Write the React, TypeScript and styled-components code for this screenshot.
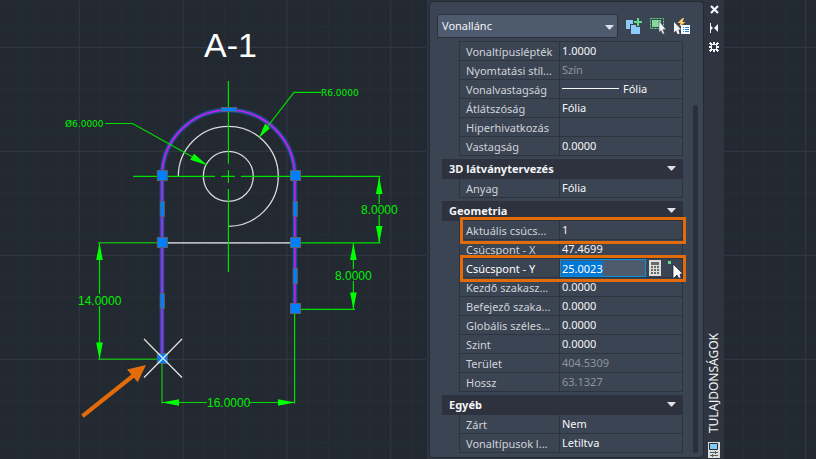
import React, { useEffect, useRef, useState } from "react";
import styled, { createGlobalStyle, css } from "styled-components";

const GlobalStyle = createGlobalStyle`
  * { box-sizing: border-box; }
  body { margin: 0; background: #222930; }
`;

const Page = styled.main`
  display: grid;
  grid-template-columns: minmax(0, 1fr) 297px 92px;
  min-height: 100vh;
  background: #222930;
  font-family: "Noto Sans", "Open Sans", sans-serif;
  font-size: 11px;
  color: #e8eaec;
`;

const DrawingArea = styled.svg`
  display: block;
  width: 100%;
  height: 100%;
`;

const PaletteFrame = styled.aside`
  display: grid;
  grid-template-columns: minmax(0, 1fr) 20px;
  padding: 1px 0 1px 2px;
  background: #2f3540;
`;

const PalettePanel = styled.section`
  display: flex;
  flex-direction: column;
  gap: 3px;
  padding: 12px 5px 3px 7px;
  border: 1px solid #242932;
  border-radius: 4px;
  background: #3b4453;
`;

const Toolbar = styled.div`
  display: flex;
  align-items: center;
  height: 24px;
  padding-right: 4px;
`;

const SelectWrap = styled.label`
  position: relative;
  flex: 1;
  height: 24px;
  margin-right: 4px;
`;

const TypeSelect = styled.select`
  appearance: none;
  width: 100%;
  height: 24px;
  padding: 0 24px 1px 4px;
  border: 1px solid #2b313c;
  border-radius: 2px;
  background: #4e5a6d;
  color: #f4f5f6;
  font: inherit;
  font-size: 11px;
`;

const SelectArrow = styled.svg`
  position: absolute;
  top: 11px;
  right: 4px;
  pointer-events: none;
`;

const IconButton = styled.button`
  display: grid;
  place-items: center;
  width: 24px;
  height: 24px;
  padding: 0;
  border: 0;
  background: none;
`;

const PanelBody = styled.div`
  display: grid;
  grid-template-columns: minmax(0, 1fr) 5px;
  gap: 10px;
  padding-left: 5px;
`;

const Sections = styled.div`
  display: flex;
  flex-direction: column;
  gap: 3px;
`;

const Group = styled.section``;

const GroupHeader = styled.button`
  display: flex;
  align-items: center;
  justify-content: space-between;
  width: 100%;
  height: 20px;
  padding: 0 7px 1px;
  border: 0;
  background: #2d323e;
  color: #f4f5f6;
  font: inherit;
  font-weight: 700;
  text-align: left;
`;

const PropertyTable = styled.table<{ $topLine?: boolean }>`
  width: calc(100% - 17px);
  margin-left: 17px;
  border-collapse: separate;
  border-spacing: 0;
  table-layout: fixed;
  ${(p) => p.$topLine && css`border-top: 1px solid #2d333f;`}
`;

const PropertyRow = styled.tr<{ $framed?: boolean }>`
  position: relative;
  height: 19px;
  ${(p) =>
    p.$framed &&
    css`
      th::after {
        content: "";
        position: absolute;
        z-index: 1;
        inset: -4px -3px -4px 1px;
        border: 3px solid #e36c0a;
        pointer-events: none;
      }
    `}
`;

const PropertyName = styled.th<{ $bright?: boolean }>`
  width: 100px;
  height: 19px;
  padding: 1px 0 0 6px;
  border-left: 1px solid #2d333f;
  border-bottom: 1px solid #2d333f;
  color: ${(p) => (p.$bright ? "#ffffff" : "#cfd3d8")};
  font-size: 11px;
  font-weight: 400;
  line-height: 17px;
  text-align: left;
  white-space: nowrap;
`;

const PropertyValue = styled.td<{ $dim?: boolean; $editing?: boolean }>`
  height: 19px;
  padding: 0 0 0 ${(p) => (p.$editing ? 0 : 2)}px;
  border: solid #2d333f;
  border-width: 0 1px 1px;
  color: ${(p) => (p.$dim ? "#8d949e" : "#f4f5f6")};
  font-size: 11px;
  line-height: 18px;
  white-space: nowrap;
`;

const LineWeight = styled.span`
  display: flex;
  align-items: center;
  gap: 4px;
`;

const Editor = styled.div`
  position: relative;
  display: flex;
  align-items: center;
  gap: 3px;
`;

const ValueInput = styled.input`
  width: 86px;
  height: 18px;
  padding: 0 1px;
  border: 1px solid #0a8fd8;
  border-radius: 0;
  outline: 0;
  background: #4e5a6d;
  color: #ffffff;
  font: inherit;
  line-height: 16px;
  &::selection {
    background: #0078d7;
    color: #ffffff;
  }
`;

const CalcButton = styled.button`
  display: flex;
  padding: 0;
  border: 0;
  background: none;
`;

const Pointer = styled.svg`
  position: absolute;
  top: 2px;
  left: 108px;
`;

const ScrollTrack = styled.div`
  padding-top: 64px;
  display: flex;
`;

const ScrollThumb = styled.div`
  flex: 1;
  border-radius: 3px;
  background: #2a303b;
`;

const TitleBar = styled.header`
  display: flex;
  flex-direction: column;
  align-items: center;
`;

const BarButton = styled.button`
  display: grid;
  place-items: center;
  width: 20px;
  height: 19px;
  padding: 0;
  border: 0;
  background: none;
  &:first-child { height: 17px; }
`;

const BarTitle = styled.h1`
  margin: auto 0 9px;
  color: #f4f5f6;
  font-size: 12px;
  font-weight: 400;
  line-height: 16px;
  writing-mode: vertical-rl;
  transform: rotate(180deg);
`;

const DownArrow = () => (
  <svg width="9" height="5" viewBox="0 0 9 5" aria-hidden="true">
    <path d="M0 0h9L5 4.5H4Z" fill="#dfe2e5" />
  </svg>
);

const GRID_STEP = 103.8;

function GridLines({ startX, width }: { startX: number; width: number }) {
  const minor: React.ReactNode[] = [];
  const major: React.ReactNode[] = [];
  for (let i = 0; i * (GRID_STEP / 5) + startX < width; i++) {
    const x = startX + (i * GRID_STEP) / 5;
    if (i % 5) minor.push(<path key={"x" + i} d={`M${x} 0V459`} />);
  }
  for (let x = startX; x < width; x += GRID_STEP) {
    if (x >= 0) major.push(<path key={"X" + x} d={`M${x} 0V459`} />);
  }
  for (let i = -2; i < 21; i++) {
    const y = 47.4 + (i * 104) / 5;
    (i % 5 ? minor : major).push(<path key={"y" + i} d={`M0 ${y}H${width}`} />);
  }
  return (
    <g>
      <g stroke="#272e37">{minor}</g>
      <g stroke="#303743" strokeWidth="1.2">{major}</g>
    </g>
  );
}

const squareGrips = [
  [162.3, 175.5],
  [295.5, 175.5],
  [162.3, 242.5],
  [295.5, 242.5],
  [295.5, 308.5],
  [162.3, 358.5],
];
const edgeGrips = [
  [162.3, 209],
  [295.3, 209],
  [162.3, 301],
  [295.3, 276],
];

function Drawing() {
  return (
    <DrawingArea viewBox="0 0 427 459" preserveAspectRatio="xMinYMin slice" role="img" aria-label="A-1">
      <GridLines startX={-24.5} width={426} />
      <g fill="none" stroke="#d8dadc" strokeWidth="1.3">
        <circle cx="228.3" cy="176.3" r="25" />
        <path d="M178.3 176.3A50 50 0 1 1 228.3 226.3" />
        <path d="M162 242.9H295" stroke="#b4b7ba" strokeWidth="1.6" />
      </g>
      <g fill="none">
        <path d="M162 359V176.3A66.4 66.4 0 0 1 294.8 176.3V308" stroke="#203f70" strokeWidth="6" opacity=".5" />
        <path d="M162 359V176.3A66.4 66.4 0 0 1 294.8 176.3V308" stroke="#24509a" strokeWidth="4" />
        <path d="M162 359V176.3" stroke="#9a31e6" strokeWidth="2" />
        <path d="M162 176.3A66.4 66.4 0 0 1 294.8 176.3V308" stroke="#cc1cf7" strokeWidth="1.5" />
      </g>
      <g fill="none" stroke="#00e000" strokeWidth="1.2">
        <path d="M228.4 81V163.7M228.4 170V183M228.4 189V272" />
        <path d="M133 176.4H215M221 176.4H235M241 176.4H380.5" />
        <path d="M105 123.5H132.5L207 165M321 92.4H294L259 137.5" />
        <path d="M379.2 177V204M379.2 215V243M353.4 243V269M353.4 281V309" />
        <path d="M301 242.8H380.5M301 309.3H355M294.6 314V403.5" />
        <path d="M99.5 243V294M99.5 306V359M162 402.5H207M249 402.5H295" />
      </g>
      <path d="M98 242.8H157M98 359.2H157M162 364V403.5" fill="none" stroke="#15a915" strokeWidth="1.5" />
      <g fill="#00ff00">
        <path d="M379.2 177l3.3 17h-6.6zM379.2 243l3.3-17h-6.6z" />
        <path d="M353.4 243l3.3 17h-6.6zM353.4 309.5l3.3-17h-6.6z" />
        <path d="M99.5 243l3.3 17h-6.6zM99.5 359.5l3.3-17h-6.6z" />
        <path d="M162 402.5l17-3.3v6.6zM295 402.5l-17-3.3v6.6z" />
        <path d="M207.3 165.2l-13.2-11.5-4 6zM259 137.8l11-9.500-5-4.500z" />
      </g>
      <g fill="#00f000" fontFamily="Liberation Sans, sans-serif" fontSize="12">
        <text x="361" y="214">8.0000</text>
        <text x="335" y="280">8.0000</text>
        <text x="78" y="305">14.0000</text>
        <text x="207" y="407">16.0000</text>
      </g>
      <g fill="#00f000" fontFamily="DejaVu Sans, sans-serif" fontSize="9">
        <text x="65" y="127">Ø6.0000</text>
        <text x="321" y="96">R6.0000</text>
      </g>
      <text x="204" y="57" fill="#ffffff" fontFamily="Liberation Sans, sans-serif" fontSize="34">A-1</text>
      <g fill="#007fff" stroke="#59636f">
        {squareGrips.map(([x, y]) => (
          <rect key={`${x}-${y}`} x={x - 5} y={y - 5} width="10" height="10" />
        ))}
        {edgeGrips.map(([x, y]) => (
          <rect key={`${x}-${y}`} x={x - 2} y={y - 7.5} width="4" height="15" />
        ))}
        <rect x="221.5" y="107.5" width="15" height="4" />
      </g>
      <path d="M144 339L182 377.5M182 339L144 377.5" stroke="#e4e7ea" strokeWidth="1.2" />
      <path d="M81.2 414.6L131.3 374.5 127 369.5 146 365 137.7 382.2 134 377.7 83.8 417.8Z" fill="#e36c0a" />
    </DrawingArea>
  );
}

function CoordinateEditor({ label, initial }: { label: string; initial: string }) {
  const field = useRef<HTMLInputElement>(null);
  const [value, setValue] = useState(initial);
  useEffect(() => {
    field.current?.focus();
    field.current?.select();
  }, []);
  return (
    <Editor>
      <ValueInput ref={field} aria-label={label} value={value} onChange={(e) => setValue(e.target.value)} />
      <CalcButton aria-label="Számológép">
        <svg width="12" height="16" viewBox="0 0 12 16">
          <path fill="#dcdedc" d="M0 0h12v16H0z" />
          <path fill="#686c69" d="M2 2h8v3H2zM2 6h2v2H2zM5 6h2v2H5zM8 6h2v2H8zM2 9h2v2H2zM5 9h2v2H5zM8 9h2v2H8zM2 12h2v2H2zM5 12h2v2H5zM8 12h2v2H8z" />
        </svg>
      </CalcButton>
      <Pointer width="15" height="17" viewBox="0 0 15 17" aria-hidden="true">
        <path d="M0 0h3v3H0z" fill="#5fd98a" />
        <path d="M5 3V17H6L9 14 10.5 17H13L12 13H15Z" fill="#ffffff" stroke="#171b2c" strokeWidth=".7" />
      </Pointer>
    </Editor>
  );
}

type Property = {
  name: string;
  value: string;
  dim?: boolean;
  framed?: boolean;
  editing?: boolean;
  line?: boolean;
};

const groups: { title?: string; rows: Property[] }[] = [
  {
    rows: [
      { name: "Vonaltípuslépték", value: "1.0000" },
      { name: "Nyomtatási stíl...", value: "Szín", dim: true },
      { name: "Vonalvastagság", value: "Fólia", line: true },
      { name: "Átlátszóság", value: "Fólia" },
      { name: "Hiperhivatkozás", value: "" },
      { name: "Vastagság", value: "0.0000" },
    ],
  },
  { title: "3D látványtervezés", rows: [{ name: "Anyag", value: "Fólia" }] },
  {
    title: "Geometria",
    rows: [
      { name: "Aktuális csúcs...", value: "1", framed: true },
      { name: "Csúcspont - X", value: "47.4699" },
      { name: "Csúcspont - Y", value: "25.0023", framed: true, editing: true },
      { name: "Kezdő szakasz...", value: "0.0000" },
      { name: "Befejező szaka...", value: "0.0000" },
      { name: "Globális széles...", value: "0.0000" },
      { name: "Szint", value: "0.0000" },
      { name: "Terület", value: "404.5309", dim: true },
      { name: "Hossz", value: "63.1327", dim: true },
    ],
  },
  {
    title: "Egyéb",
    rows: [
      { name: "Zárt", value: "Nem" },
      { name: "Vonaltípusok l...", value: "Letiltva" },
    ],
  },
];

function PropertyCell({ row }: { row: Property }) {
  if (row.editing) return <CoordinateEditor label={row.name} initial={row.value} />;
  if (row.line) {
    return (
      <LineWeight>
        <svg width="57" height="2" aria-hidden="true"><path d="M0 .5H57" stroke="#f4f5f6" /></svg>
        {row.value}
      </LineWeight>
    );
  }
  return <>{row.value}</>;
}

export default function App() {
  return (
    <>
      <GlobalStyle />
      <Page>
        <Drawing />
        <PaletteFrame>
          <PalettePanel>
            <Toolbar>
              <SelectWrap>
                <TypeSelect aria-label="Objektumtípus" defaultValue="Vonallánc">
                  <option>Vonallánc</option>
                </TypeSelect>
                <SelectArrow width="9" height="5" viewBox="0 0 9 5" aria-hidden="true">
                  <path d="M0 0h9L5 4.5H4Z" fill="#dfe2e5" />
                </SelectArrow>
              </SelectWrap>
              <IconButton aria-label="PICKADD">
                <svg width="16" height="16" viewBox="0 0 16 16">
                  <path d="M0 2h7v9H0z" fill="#8bcbfb" />
                  <path d="M4 6h11v10H4z" fill="#3b4453" />
                  <path d="M5 7h9v9H5z" fill="#8bcbfb" />
                  <path d="M10 0h4v2h2v4h-2v3h-4V6H7V2h3z" fill="#3b4453" />
                  <path d="M11 0h2v3h3v2h-3v3h-2V5H8V3h3z" fill="#5fd98a" />
                </svg>
              </IconButton>
              <IconButton aria-label="Objektumok kiválasztása">
                <svg width="16" height="16" viewBox="0 0 16 16">
                  <rect x=".5" y=".5" width="13" height="10" fill="none" stroke="#5fd98a" strokeDasharray="2 1" />
                  <path d="M2 2h9v7H2z" fill="#84d99b" />
                  <path d="M9 3v11.500l2-2 1.500 3.500h2l-1.500-4.500h3z" fill="#f2f4f5" stroke="#3b4453" strokeWidth=".5" />
                </svg>
              </IconButton>
              <IconButton aria-label="Gyorskiválasztás">
                <svg width="16" height="16" viewBox="0 0 16 16">
                  <path d="M8.500 0L3.500 5h3L5.500 8.500 11.500 4H8.500L10 0Z" fill="#ffd06a" />
                  <path d="M0 4v10.500l2-2 1.500 3.500h2L4.500 11.500H7z" fill="#f2f4f5" />
                  <path d="M7 7h9v9H7z" fill="#f7f8f9" />
                  <path d="M9 9.500h1M11 9.500h4M9 11.500h1M11 11.500h4M9 13.500h1M11 13.500h4" stroke="#2786c9" />
                </svg>
              </IconButton>
            </Toolbar>
            <PanelBody>
              <Sections>
                {groups.map((group, index) => (
                  <Group key={index} aria-label={group.title}>
                    {group.title && (
                      <GroupHeader>
                        {group.title}
                        <DownArrow />
                      </GroupHeader>
                    )}
                    <PropertyTable $topLine={!group.title}>
                      <tbody>
                        {group.rows.map((row) => (
                          <PropertyRow key={row.name} $framed={row.framed}>
                            <PropertyName scope="row" $bright={row.editing}>{row.name}</PropertyName>
                            <PropertyValue $dim={row.dim} $editing={row.editing}>
                              <PropertyCell row={row} />
                            </PropertyValue>
                          </PropertyRow>
                        ))}
                      </tbody>
                    </PropertyTable>
                  </Group>
                ))}
              </Sections>
              <ScrollTrack>
                <ScrollThumb />
              </ScrollTrack>
            </PanelBody>
          </PalettePanel>
          <TitleBar>
            <BarButton aria-label="Bezárás">
              <svg width="9" height="9" viewBox="0 0 9 9">
                <path d="M1 1l7 7M8 1L1 8" stroke="#f4f5f6" strokeWidth="2.2" />
              </svg>
            </BarButton>
            <BarButton aria-label="Automatikus elrejtés">
              <svg width="9" height="10" viewBox="0 0 9 10">
                <path d="M0 0h1v10H0zM1 3l2 2-2 2zM8 1v8L4 5z" fill="#f4f5f6" />
              </svg>
            </BarButton>
            <BarButton aria-label="Beállítások">
              <svg width="10" height="10" viewBox="0 0 10 10" shapeRendering="crispEdges">
                <path d="M1 0h1v1h1v1h1V0h2v2h1V1h1V0h1v1h1v1H9v1H8v1h2v2H8v1h1v1h1v1H9v1H8V9H7V8H6v2H4V8H3v1H2v1H1V9H0V8h1V7h1V6H0V4h2V3H1V2H0V1h1zM3 3v4h4V3z" fill="#f4f5f6" fillRule="evenodd" />
              </svg>
            </BarButton>
            <BarTitle>TULAJDONSÁGOK</BarTitle>
            <svg width="12" height="16" viewBox="0 0 12 16" aria-hidden="true">
              <path d="M0 0h12v16H0z" fill="#d9dcda" />
              <path d="M1.5 1.5h8v6h-8z" fill="#83c9fa" stroke="#252b35" />
              <path d="M2 10.5h8M2 13.5h8M7.5 9v3M4.5 12v3" stroke="#555b60" />
            </svg>
          </TitleBar>
        </PaletteFrame>
        <DrawingArea viewBox="0 0 92 459" preserveAspectRatio="xMinYMin slice" aria-hidden="true">
          <GridLines startX={-22.2} width={92} />
        </DrawingArea>
      </Page>
    </>
  );
}
